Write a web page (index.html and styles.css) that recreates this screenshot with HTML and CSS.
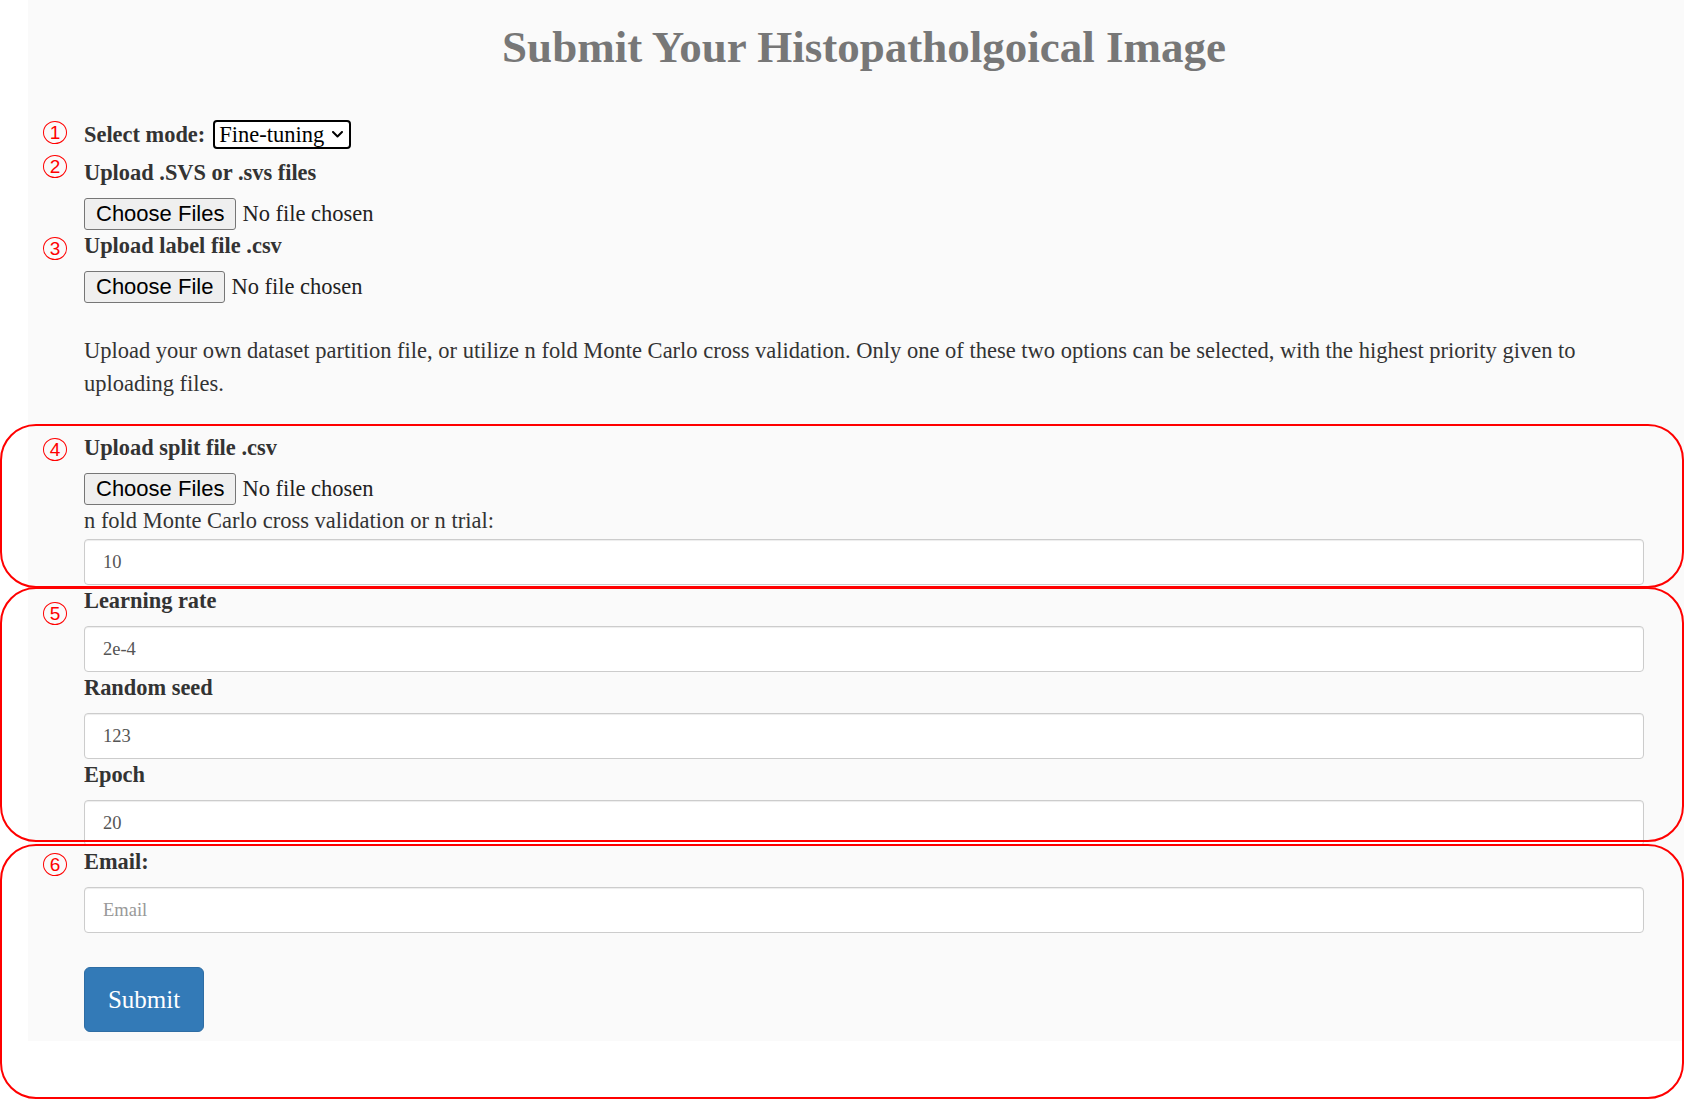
FILE: index.html
```html
<!DOCTYPE html>
<html lang="en">
<head>
<meta charset="utf-8">
<title>Submit Your Histopatholgoical Image</title>
<link rel="stylesheet" href="styles.css">
</head>
<body>
<div class="page">
<div class="panel">
  <h1 class="title">Submit Your Histopatholgoical Image</h1>
  <form class="form" onsubmit="return false;">
    <div class="group g-mode">
      <span class="num n1">1</span>
      <div class="mode">
        <label class="lbl" for="mode">Select mode:</label>
        <span class="select-wrap">
          <select id="mode" class="select"><option>Fine-tuning</option><option>Inference</option></select>
          <svg class="chev" viewBox="0 0 11 7" aria-hidden="true"><polyline points="1,1 5.5,5.5 10,1" fill="none" stroke="#000" stroke-width="2" stroke-linecap="round" stroke-linejoin="round"/></svg>
        </span>
      </div>
    </div>

    <div class="group g-svs">
      <span class="num n2">2</span>
      <div>
        <label class="lbl">Upload .SVS or .svs files</label>
        <div class="file"><button type="button" class="file-btn">Choose Files</button><span class="file-name">No file chosen</span></div>
      </div>
    </div>

    <div class="group g-label">
      <span class="num n3">3</span>
      <div>
        <label class="lbl">Upload label file .csv</label>
        <div class="file"><button type="button" class="file-btn">Choose File</button><span class="file-name">No file chosen</span></div>
      </div>
    </div>

    <p class="note">Upload your own dataset partition file, or utilize n fold Monte Carlo cross validation. Only one of these two options can be selected, with the highest priority given to uploading files.</p>

    <div class="group g-split">
      <span class="num n4">4</span>
      <div>
        <label class="lbl">Upload split file .csv</label>
        <div class="file"><button type="button" class="file-btn">Choose Files</button><span class="file-name">No file chosen</span></div>
        <label class="hint" for="trial">n fold Monte Carlo cross validation or n trial:</label>
        <input id="trial" class="input" type="text" value="10">
      </div>
    </div>

    <div class="group g-hyper">
      <span class="num n5">5</span>
      <div>
        <label class="lbl" for="lr">Learning rate</label>
        <input id="lr" class="input" type="text" value="2e-4">
        <label class="lbl" for="seed">Random seed</label>
        <input id="seed" class="input" type="text" value="123">
        <label class="lbl" for="epoch">Epoch</label>
        <input id="epoch" class="input" type="text" value="20">
      </div>
    </div>

    <div class="group g-email">
      <span class="num n6">6</span>
      <div>
        <label class="lbl" for="email">Email:</label>
        <input id="email" class="input" type="email" placeholder="Email">
        <button type="submit" class="submit">Submit</button>
      </div>
    </div>
  </form>
</div>

<div class="annot a4"></div>
<div class="annot a5"></div>
<div class="annot a6"></div>
</div>
</body>
</html>
```

FILE: styles.css
```css
html, body {
  margin: 0;
  padding: 0;
  background: #ffffff;
}

body {
  font-family: "Liberation Serif", "Times New Roman", serif;
  color: #333333;
}

.page {
  position: relative;
  min-height: 1100px;
}

.panel {
  box-sizing: border-box;
  width: 1656px;
  margin-left: 28px;
  padding: 22px 40px 9px 15px;
  background: #fafafa;
}

.title {
  margin: 0 0 0 41px;
  font-size: 45px;
  line-height: 50px;
  font-weight: bold;
  color: #777777;
  text-align: center;
}

.form {
  margin: 47px 0 0 0;
}

.group {
  display: grid;
  grid-template-columns: 41px 1fr;
  align-items: start;
}

.num {
  box-sizing: border-box;
  display: flex;
  align-items: center;
  justify-content: center;
  width: 24px;
  height: 23px;
  border: 1.5px solid #ff0000;
  border-radius: 50%;
  font-family: "Liberation Sans", Arial, sans-serif;
  font-size: 19px;
  line-height: 1;
  color: #ff0000;
}

.n1 { margin-top: 2px; }
.n2 { margin-top: -2px; }
.n3 { margin-top: 7px; }
.n4 { margin-top: 6px; }
.n5 { margin-top: 17px; }
.n6 { margin-top: 7px; }

.g-svs { margin-top: 7px; }
.g-split { margin-top: 32px; }

.lbl {
  display: block;
  font-size: 22.4px;
  line-height: 31px;
  font-weight: bold;
  margin-bottom: 10px;
}

.mode {
  display: flex;
  align-items: center;
  gap: 8px;
  height: 31px;
}

.mode .lbl {
  margin-bottom: 0;
}

.select-wrap {
  position: relative;
  display: inline-block;
  height: 29px;
}

.select {
  -webkit-appearance: none;
  appearance: none;
  box-sizing: border-box;
  width: 138px;
  height: 29px;
  margin: 0;
  padding: 0 0 0 4px;
  border: 2px solid #000000;
  border-radius: 4px;
  background: #ffffff;
  color: #000000;
  font-family: "Liberation Serif", "Times New Roman", serif;
  font-size: 22.5px;
}

.chev {
  position: absolute;
  right: 8px;
  top: 11px;
  width: 11px;
  height: 7px;
  pointer-events: none;
}

.file {
  display: flex;
  align-items: center;
  gap: 6px;
  height: 32px;
}

.file-btn {
  box-sizing: border-box;
  height: 32px;
  margin: 0;
  padding: 0 11px;
  border: 1px solid #767676;
  border-radius: 3px;
  background: #efefef;
  color: #000000;
  font-family: "Liberation Sans", Arial, sans-serif;
  font-size: 22px;
  line-height: 30px;
}

.file-name {
  font-size: 22.5px;
  color: #222222;
}

.note {
  margin: 31px 0 0 41px;
  font-size: 22.5px;
  line-height: 33px;
}

.hint {
  display: block;
  font-size: 22.5px;
  line-height: 31px;
  margin-bottom: 3px;
}

.input {
  box-sizing: border-box;
  display: block;
  width: 100%;
  height: 46px;
  margin: 0;
  padding: 0 18px;
  border: 1px solid #cccccc;
  border-radius: 4px;
  background: #ffffff;
  box-shadow: inset 0 1px 1px rgba(0, 0, 0, 0.075);
  color: #555555;
  font-family: "Liberation Serif", "Times New Roman", serif;
  font-size: 18.5px;
}

.input::placeholder {
  color: #999999;
}

.submit {
  display: block;
  box-sizing: border-box;
  width: 120px;
  height: 65px;
  margin-top: 34px;
  padding: 0;
  border: 1px solid #2e6da4;
  border-radius: 6px;
  background: #337ab7;
  color: #ffffff;
  font-family: "Liberation Serif", "Times New Roman", serif;
  font-size: 25px;
}

.annot {
  position: absolute;
  left: 0;
  width: 1684px;
  box-sizing: border-box;
  border: 2px solid #ff0000;
  border-radius: 36px;
  pointer-events: none;
}

.a4 { top: 424px; height: 164px; }
.a5 { top: 587px; height: 255px; }
.a6 { top: 844px; height: 255px; }
```
